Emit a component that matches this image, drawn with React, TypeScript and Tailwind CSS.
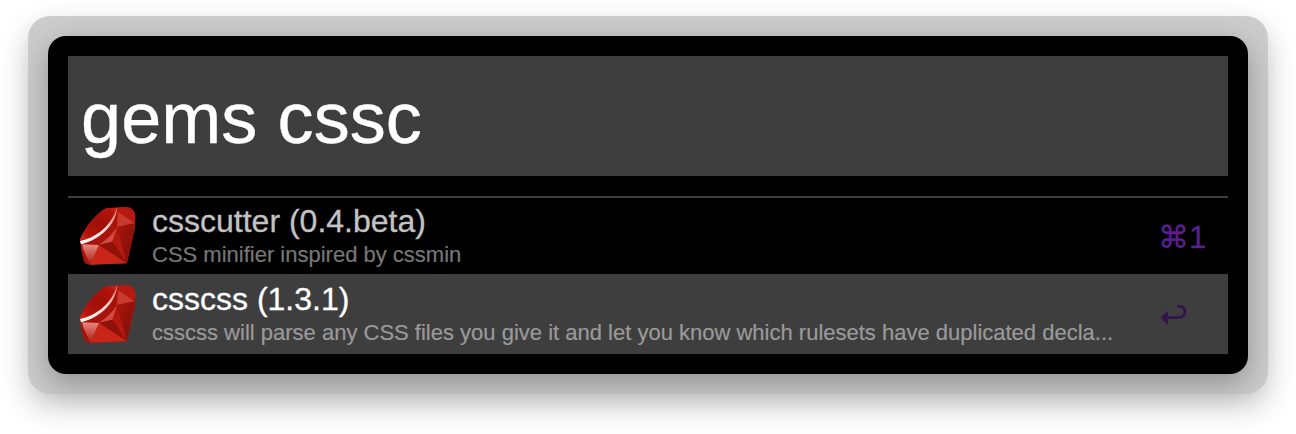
const Ruby = () => (
  <svg width="58" height="60" viewBox="24 21 174 180" className="shrink-0">
    <defs>
      <radialGradient id="rt" cx="0.55" cy="0.5" r="0.7">
        <stop offset="0" stopColor="#9c0f08" />
        <stop offset="0.7" stopColor="#b4140b" />
        <stop offset="1" stopColor="#cf2c20" />
      </radialGradient>
      <linearGradient id="rr" x1="0" y1="0" x2="1" y2="1">
        <stop offset="0" stopColor="#a8160d" />
        <stop offset="1" stopColor="#7a0e07" />
      </linearGradient>
      <linearGradient id="rl" x1="0" y1="0" x2="0" y2="1">
        <stop offset="0" stopColor="#e58a80" />
        <stop offset="1" stopColor="#b01a10" />
      </linearGradient>
      <linearGradient id="ra" x1="0" y1="1" x2="1" y2="0">
        <stop offset="0" stopColor="#ffffff" />
        <stop offset="0.6" stopColor="#f4d6d0" />
        <stop offset="1" stopColor="#e06a5e" />
      </linearGradient>
    </defs>
    <path d="M27 120 C38 92 70 48 105 28 L165 24 Q190 26 193 50 L192 86 L169 190 L165 193 L60 197 Q44 196 41 190 Q30 165 27 120Z" fill="#a8140c" />
    <path d="M27 124 C38 92 70 48 105 28 L137 26 C132 55 112 80 84 100 C66 112 46 120 27 124Z" fill="url(#rt)" />
    <path d="M137 26 L165 24 Q190 26 193 50 L192 70 L137 84 Z" fill="#b5190f" />
    <path d="M142 40 L190 72 L138 84 Z" fill="#c93a2e" />
    <path d="M138 84 L192 74 L167 192 Z" fill="url(#rr)" />
    <path d="M138 84 L124 128 L167 192 Z" fill="#b2190f" />
    <path d="M84 138 C108 122 126 104 138 84 L124 128 Z" fill="#d24a40" />
    <path d="M84 138 L124 128 L167 192 Z" fill="#8c120a" />
    <path d="M84 138 L167 193 L58 197 Z" fill="#c92519" />
    <path d="M34 136 L84 138 L58 197 L42 190 Q36 165 34 136Z" fill="url(#rl)" />
    <path d="M30 136 L58 197 L42 192 Q32 165 30 136Z" fill="#a5140c" />
    <path d="M27 126 C50 121 70 111 88 98 C112 79 130 54 137 26 L139 26 C136 58 116 88 90 107 C72 121 50 131 30 136 Z" fill="url(#ra)" />
  </svg>
);

const Enter = () => (
  <svg width="28" height="24" viewBox="0 0 28 24" className="block">
    <path d="M8 13.7 H18 Q26 13.7 26 7.8 Q26 2 18 2" fill="none" stroke="#32154f" strokeWidth="2.8" />
    <path d="M1.5 13.7 L9 6.7 V21 Z" fill="#32154f" />
  </svg>
);

function Row({ title, sub, selected, hint }: { title: string; sub: string; selected?: boolean; hint: React.ReactNode }) {
  return (
    <div className={`flex items-center pl-[11px] ${selected ? "h-[80px] bg-[#3e3e3e] pr-[2px]" : "h-[76px] pr-[22px]"}`}>
      <Ruby />
      <div className="ml-[15px] min-w-0 flex-1 pb-[2px]">
        <div className={`text-[32px] leading-[36px] [-webkit-text-stroke:0.3px] ${selected ? "text-white" : "text-[#c3c3c3]"}`}>{title}</div>
        <div className={`mt-[3px] text-[22px] leading-[26px] [-webkit-text-stroke:0.2px] ${selected ? "text-[#9a9a9a]" : "text-[#777777]"}`}>{sub}</div>
      </div>
      {hint}
    </div>
  );
}

export default function App() {
  return (
    <div className="h-[434px] w-[1296px] overflow-hidden bg-white px-[28px] pt-[16px] font-['Liberation_Sans',Arial,sans-serif]">
      <div className="h-[378px] w-[1240px] rounded-[22px] bg-[#cccccc] p-[20px] shadow-[0_12px_30px_rgba(0,0,0,0.22)]">
        <div className="h-[338px] rounded-[18px] bg-black p-[20px] shadow-[0_10px_30px_rgba(0,0,0,0.3)]">
          <div className="flex h-[120px] items-center bg-[#3e3e3e] pl-[13px] pt-[4px] text-[72px] leading-none tracking-[0.1px] text-white [-webkit-text-stroke:0.4px]">gems cssc</div>
          <div className="mt-[20px] h-[2px] bg-[#3e3e3e]" />
          <Row
            title="csscutter (0.4.beta)"
            sub="CSS minifier inspired by cssmin"
            hint={<div className="w-[48px] pt-[2px] text-[31px] leading-none text-[#5b1f8f] [-webkit-text-stroke:0.3px]">⌘1</div>}
          />
          <Row
            selected
            title="csscss (1.3.1)"
            sub="csscss will parse any CSS files you give it and let you know which rulesets have duplicated decla..."
            hint={<div className="w-[67px] pt-[4px]"><Enter /></div>}
          />
        </div>
      </div>
    </div>
  );
}
